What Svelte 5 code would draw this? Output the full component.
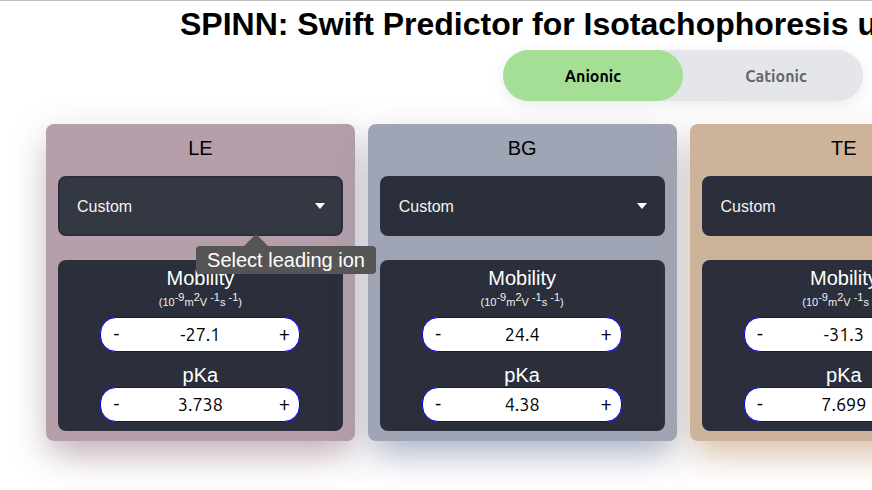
<script>
  let mode = $state('anionic');
  let zones = $state([
    { id: 'le', name: 'LE', tone: 'rose', tip: 'Select leading ion', tipOpen: true, mobility: '-27.1', pka: '3.738' },
    { id: 'bg', name: 'BG', tone: 'slate', mobility: '24.4', pka: '4.38' },
    { id: 'te', name: 'TE', tone: 'sand', mobility: '-31.3', pka: '7.699' }
  ]);

  function step(zone, key, amount) {
    const digits = (zone[key].split('.')[1] ?? '').length;
    zone[key] = (Number(zone[key]) + amount).toFixed(digits);
  }
</script>

{#snippet stepper(zone, key, label)}
  <div class="stepper">
    <button type="button" aria-label="Decrease {label}" onclick={() => step(zone, key, -1)}>-</button>
    <input id="{zone.id}-{key}" type="text" inputmode="decimal" bind:value={zone[key]} />
    <button type="button" aria-label="Increase {label}" onclick={() => step(zone, key, 1)}>+</button>
  </div>
{/snippet}

<div class="viewport">
  <main>
    <h1>SPINN: Swift Predictor for Isotachophoresis using Neural Networks</h1>

    <div class="toggle" role="radiogroup" aria-label="Mode">
      <label class:on={mode === 'anionic'}>
        <input type="radio" name="mode" value="anionic" bind:group={mode} />Anionic
      </label>
      <label class="last" class:on={mode === 'cationic'}>
        <input type="radio" name="mode" value="cationic" bind:group={mode} />Cationic
      </label>
    </div>

    <div class="cards">
      {#each zones as zone (zone.id)}
        <section class="card {zone.tone}">
          <h2>{zone.name}</h2>
          <div class="picker" class:active={zone.tipOpen}>
            <select aria-label={zone.name}>
              <option>Custom</option>
            </select>
            <svg class="caret" viewBox="0 0 10 6" aria-hidden="true"><path d="M0 0H10L5 6Z" fill="#fff" /></svg>
            {#if zone.tipOpen}
              <div class="tip" role="tooltip">{zone.tip}</div>
            {/if}
          </div>
          <div class="panel">
            <label class="name" for="{zone.id}-mobility">Mobility</label>
            <p class="unit">(10<sup>-9</sup>m<sup>2</sup>V <sup>-1</sup>s <sup>-1</sup>)</p>
            {@render stepper(zone, 'mobility', 'mobility')}
            <label class="name second" for="{zone.id}-pka">pKa</label>
            {@render stepper(zone, 'pka', 'pKa')}
          </div>
        </section>
      {/each}
    </div>
  </main>
</div>

<style>
  :global(body) {
    margin: 0;
    background: #fff;
  }
  * {
    box-sizing: border-box;
  }
  .viewport {
    overflow: hidden;
    min-height: 100vh;
    border-top: 1px solid #c0c0c0;
    font-family: "Liberation Sans", Arial, sans-serif;
  }
  main {
    min-width: 1366px;
  }
  h1 {
    margin: 0;
    padding: 4px 0 0 180px;
    font-size: 32px;
    line-height: 38px;
    white-space: nowrap;
  }
  .toggle {
    display: flex;
    width: 360px;
    height: 51px;
    margin: 7px auto 0;
    border-radius: 26px;
    background: #e5e6ea;
    box-shadow: 0 4px 16px rgba(0, 0, 0, 0.08);
  }
  .toggle label {
    width: 50%;
    display: flex;
    align-items: center;
    justify-content: center;
    position: relative;
    border-radius: 26px;
    font: bold 16px/24px Ubuntu, "Noto Sans", sans-serif;
    color: #666;
    cursor: pointer;
  }
  .toggle label.on {
    background: #a5df95;
    color: #000;
  }
  .toggle .last {
    padding-left: 6px;
  }
  .toggle input {
    appearance: none;
    position: absolute;
    inset: 0;
    margin: 0;
    border-radius: 26px;
    cursor: pointer;
  }
  .cards {
    display: grid;
    grid-template-columns: repeat(4, 1fr);
    gap: 13px;
    padding: 23px 46px 60px;
  }
  .card {
    padding: 12px 12px 10px;
    border-radius: 8px;
  }
  .rose {
    background: #b49fab;
    box-shadow: 0 12px 36px rgba(110, 85, 100, 0.3), 0 20px 30px -10px rgba(180, 140, 160, 0.4);
  }
  .slate {
    background: #a0a5b5;
    box-shadow: 0 12px 36px rgba(140, 140, 165, 0.35), 0 20px 30px -10px rgba(130, 145, 175, 0.5);
  }
  .sand {
    background: #cdb39a;
    box-shadow: 0 12px 36px rgba(190, 155, 125, 0.35), 0 20px 30px -10px rgba(205, 165, 125, 0.5);
  }
  h2 {
    margin: 0 0 16px;
    font-size: 20px;
    font-weight: 400;
    line-height: 24px;
    text-align: center;
  }
  .picker {
    position: relative;
    margin-bottom: 24px;
  }
  select {
    appearance: none;
    display: block;
    width: 100%;
    height: 60px;
    padding: 0 17px;
    border: 2px solid #2b2f3b;
    border-radius: 8px;
    background: #2b2f3b;
    color: #f4f4f4;
    font: 16px "Liberation Sans", Arial, sans-serif;
  }
  .active select,
  select:hover {
    background: #343842;
  }
  .caret {
    position: absolute;
    top: 27px;
    right: 18px;
    width: 10px;
    height: 6px;
    pointer-events: none;
  }
  .tip {
    position: absolute;
    z-index: 2;
    top: 70px;
    left: 138px;
    width: 180px;
    border-radius: 4px;
    background: #555;
    color: #fff;
    font-size: 20px;
    line-height: 28px;
    text-align: center;
    white-space: nowrap;
  }
  .tip::before {
    content: "";
    position: absolute;
    bottom: 100%;
    left: 48px;
    border: 12px solid transparent;
    border-top: 0;
    border-bottom-color: #555;
  }
  .panel {
    display: flex;
    flex-direction: column;
    align-items: center;
    padding: 6px 0 9px;
    border-radius: 8px;
    background: #2b2f3b;
    color: #fff;
  }
  .name {
    font-size: 20px;
    line-height: 24px;
  }
  .second {
    margin-top: 11px;
  }
  .unit {
    margin: 0;
    padding: 3px 0 6px;
    color: #f0f0f0;
    font-size: 11px;
    line-height: 18px;
  }
  .unit sup {
    font-size: 11px;
    line-height: 0;
  }
  .stepper {
    display: flex;
    width: 200px;
    height: 35px;
    border: 1px solid #0000ff;
    border-radius: 16px;
    background: #fff;
    overflow: hidden;
  }
  .stepper button,
  .stepper input {
    padding: 0 0 2px;
    border: 0;
    background: none;
    color: #000;
    font: 18px Ubuntu, "Noto Sans", sans-serif;
    text-align: center;
  }
  .stepper button {
    width: 30px;
    font-size: 20px;
    cursor: pointer;
  }
  .stepper input {
    flex: 1;
    min-width: 0;
  }
</style>
